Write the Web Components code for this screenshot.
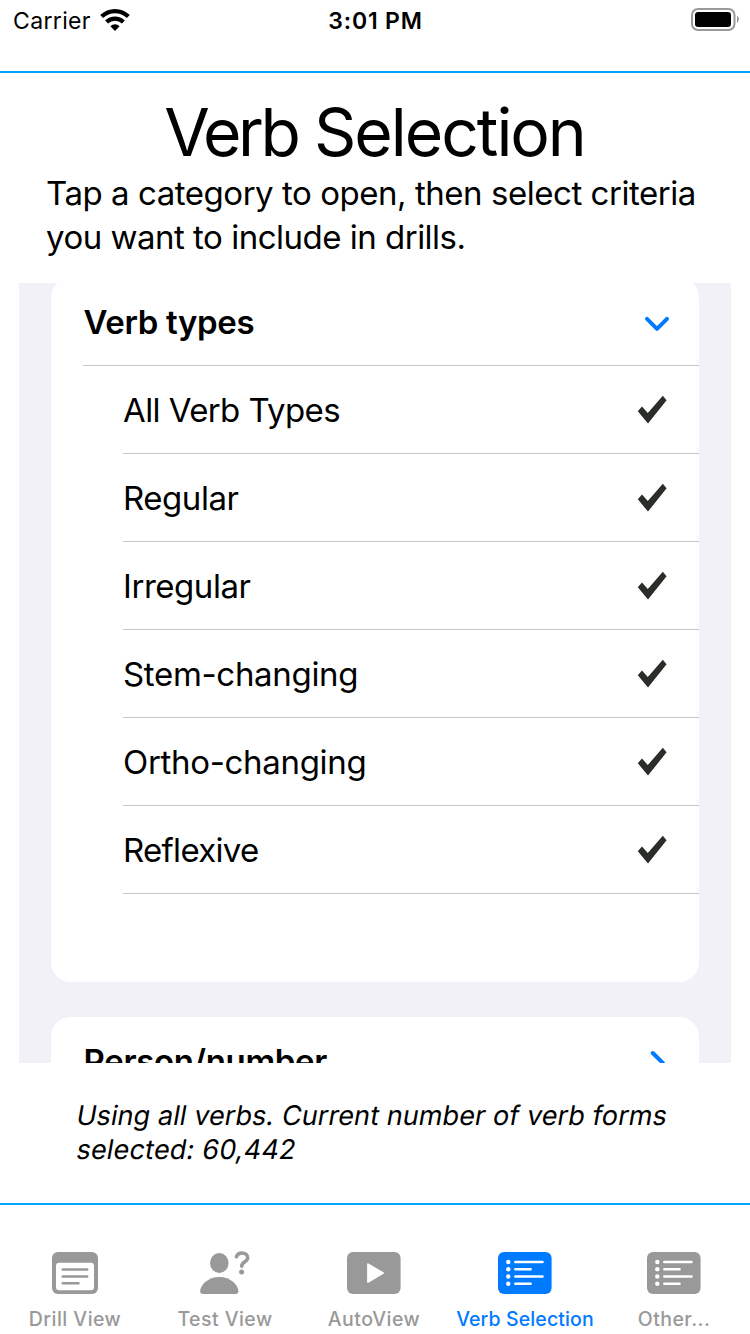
<!DOCTYPE html>
<html lang="en">
<head>
<meta charset="utf-8">
<title>Verb Selection</title>
<style>
html,body{margin:0;background:#fff}
body{font-family:Inter,"Liberation Sans",sans-serif;color:#000;width:750px;height:1334px;overflow:hidden}
</style>
</head>
<body>
<verb-app></verb-app>
<script>
const define = (name, html, after) => customElements.define(name, class extends HTMLElement {
  constructor() {
    super();
    const t = document.createElement('template');
    t.innerHTML = html;
    this.attachShadow({mode: 'open'}).append(t.content.cloneNode(true));
    if (after) after(this);
  }
});

define('status-bar', `
<style>
:host{display:grid;grid-template-columns:1fr auto 1fr;height:71px;box-sizing:border-box;padding:7px 11px 0 13px;align-items:start;font-size:23px;line-height:28px}
.left{display:flex;gap:9px;letter-spacing:.35px}
.time{font-weight:600;letter-spacing:.8px;margin-right:1px}
.wifi{margin-top:1px}
.bat{justify-self:end}
svg{display:block}
</style>
<div class="left"><span>Carrier</span><svg class="wifi" width="30" height="24" viewBox="0 0 30 24"><g fill="none" stroke="#000" stroke-width="4.2"><path d="M1.7 8.6A19 19 0 0 1 28.3 8.6"/><path d="M6.6 14A12 12 0 0 1 23.4 14"/></g><path d="M10.4 18.2A6.6 6.6 0 0 1 19.6 18.2L15 23Z"/></svg></div>
<span class="time">3:01 PM</span>
<svg class="bat" width="48" height="26" viewBox="0 0 48 26"><rect x="1" y="2" width="42.5" height="21" rx="6" fill="none" stroke="#999" stroke-width="2"/><rect x="4" y="5" width="36" height="15" rx="3.2"/><path d="M46 8.6C48.4 10.2 48.4 14.4 46 16Z" fill="#999"/></svg>`);

define('page-heading', `
<style>
:host{display:block;padding:22px 0 0 46px}
h1{margin:0 47px 0 0;text-align:center;font-weight:400;font-size:66px;line-height:74px;letter-spacing:-2.04px}
h1 span{letter-spacing:-3.4px}
p{margin:2px 0 0;font-size:33px;line-height:44px;white-space:nowrap}
p span{display:block;letter-spacing:-.46px}
p span+span{letter-spacing:-.5px}
</style>
<h1><span>Verb</span> Selection</h1>
<p><span>Tap a category to open, then select criteria</span><span>you want to include in drills.</span></p>`);

define('section-header', `
<style>
:host{display:flex;height:88px;align-items:center;justify-content:space-between;margin-left:32px;padding:0 29px 0 .5px;box-sizing:border-box;border-bottom:1px solid #c6c6c8;font-size:33px;font-weight:600;letter-spacing:-.34px}
svg{display:block;margin-top:4px}
:host(:not([open])) svg{transform:translateX(1px) rotate(-90deg)}
</style>
<slot></slot><svg width="26" height="26" viewBox="0 0 26 26"><path d="M3 7.8L13 17.8L23 7.8" fill="none" stroke="#007aff" stroke-width="4" stroke-linecap="round" stroke-linejoin="round"/></svg>`);

define('check-row', `
<style>
:host{display:flex;height:88px;align-items:center;justify-content:space-between;margin-left:72px;padding:0 32px 0 0;box-sizing:border-box;border-bottom:1px solid #c6c6c8;font-size:33px;letter-spacing:var(--track,-.46px)}
svg{display:block;margin-top:1px}
</style>
<slot></slot><svg width="30" height="30" viewBox="0 0 30 30"><path d="M.8 16.2L5 11.5L10.8 18L25.8 .8L29.6 5.2L11 28.6Z" fill="#2b2d29"/></svg>`);

define('list-card', `
<style>:host{display:block;background:#fff;border-radius:20px;flex:none}</style><slot></slot>`);

define('scroll-panel', `
<style>
:host{display:flex;flex-direction:column;justify-content:flex-start;gap:35px;margin:0 19px;padding:0 32px;height:780px;overflow:hidden;background:#f2f1f7;box-sizing:border-box}
::slotted(:first-child){margin-top:-5px;height:704px}
::slotted(:last-child){height:120px}
</style><slot></slot>`);

/* The note is a slanted roman: upright letterforms skewed about the baseline. */
define('selection-note', `
<style>
:host{display:block;padding:36px 0 0 75px;height:140px;box-sizing:border-box;font-size:27px;line-height:34px;white-space:nowrap}
span{display:block;width:max-content;letter-spacing:.09px;transform:skewX(-10deg);transform-origin:0 27px}
span+span{letter-spacing:.2px}
</style><span>Using all verbs. Current number of verb forms</span><span>selected: 60,442</span>`);

const list = '<svg width="54" height="42" viewBox="0 0 54 42"><rect width="53.6" height="42" rx="6" fill="currentColor"/><g fill="#fff"><circle cx="10.3" cy="10" r="2.2"/><circle cx="10.3" cy="17.2" r="2.2"/><circle cx="10.3" cy="24.5" r="2.2"/><circle cx="10.3" cy="31.8" r="2.2"/></g><path d="M17.3 10H44.5M17.3 17.2H32.6M17.3 24.5H44.5M17.3 31.8H32.6" stroke="#fff" stroke-width="2.5" stroke-linecap="round"/></svg>';
const icons = {
  drill: '<svg width="46" height="42" viewBox="0 0 46 42"><rect width="46" height="42" rx="6" fill="currentColor"/><rect x="4" y="10.8" width="38" height="27.4" rx="3" fill="#fff"/><path d="M10.7 17.6H35.2M10.7 24.4H35.2M10.7 31.2H26.5" stroke="currentColor" stroke-width="2.5" stroke-linecap="round"/></svg>',
  test: '<svg width="50" height="42" viewBox="0 0 50 42" overflow="visible"><ellipse cx="19.3" cy="11" rx="9.3" ry="10" fill="currentColor"/><path d="M3.2 42C1 42 .2 41 .2 39.2C.2 33.2 8 25 19.3 25S38.4 33.2 38.4 39.2C38.4 41 37.5 42 35.4 42Z" fill="currentColor"/><path d="M36.4 4.8C37.2 2.2 39.2 1 42 1C45.4 1 47.7 2.8 47.7 5.8C47.7 10 41.7 9.6 41.7 14.2" fill="none" stroke="currentColor" stroke-width="3.5" stroke-linecap="round"/><circle cx="41.6" cy="20" r="2.5" fill="currentColor"/></svg>',
  play: '<svg width="54" height="42" viewBox="0 0 54 42"><rect width="53.6" height="42" rx="6" fill="currentColor"/><path d="M21 12.2L36 21L21 30Z" fill="#fff" stroke="#fff" stroke-width="1.8" stroke-linejoin="round"/></svg>',
  list
};
define('tab-item', `
<style>
:host{display:flex;flex-direction:column;align-items:center;color:#999;font-size:19.5px;font-weight:500;line-height:24px;letter-spacing:.46px;white-space:nowrap}
:host([active]){color:#007aff;letter-spacing:.12px}
:host([icon=play]),:host([icon=list]:not([active])){margin:0 1px 0 -1px}
.i{height:42px;margin-bottom:13px}
svg{display:block}
</style><div class="i"></div><slot></slot>`, el => {
  el.shadowRoot.querySelector('.i').innerHTML = icons[el.getAttribute('icon')] || '';
});

define('tab-bar', `
<style>:host{display:grid;grid-template-columns:repeat(5,1fr);height:129px;box-sizing:border-box;padding-top:47px}</style><slot></slot>`);

define('rule-line', `<style>:host{display:block;height:2px;background:#00a2ff}</style>`);

define('verb-app', `
<style>
:host{display:flex;flex-direction:column;height:1334px;width:750px}
page-heading{height:210px;box-sizing:border-box;flex:none}
.n{--track:-.6px}.w{--track:-.32px}.x{--track:-.7px}
</style>
<status-bar></status-bar>
<rule-line></rule-line>
<page-heading></page-heading>
<scroll-panel>
<list-card><section-header open>Verb types</section-header><check-row class="n">All Verb Types</check-row><check-row>Regular</check-row><check-row>Irregular</check-row><check-row class="w">Stem-changing</check-row><check-row class="w">Ortho-changing</check-row><check-row class="x">Reflexive</check-row></list-card>
<list-card><section-header>Person/number</section-header></list-card>
</scroll-panel>
<selection-note></selection-note>
<rule-line></rule-line>
<tab-bar><tab-item icon="drill">Drill View</tab-item><tab-item icon="test">Test View</tab-item><tab-item icon="play">AutoView</tab-item><tab-item icon="list" active>Verb Selection</tab-item><tab-item icon="list">Other...</tab-item></tab-bar>`);
</script>
</body>
</html>
